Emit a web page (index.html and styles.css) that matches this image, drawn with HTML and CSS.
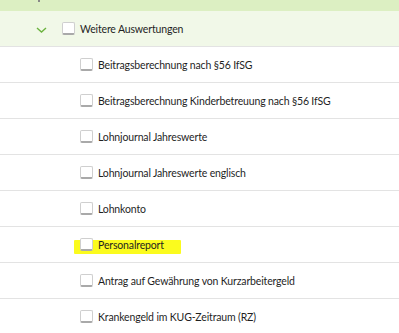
FILE: index.html
```html
<!DOCTYPE html>
<html lang="de">
<head>
    <meta charset="UTF-8">
    <title>Auswertungen</title>
    <link rel="stylesheet" href="styles.css">
</head>
<body>
    <div class="top-strip"><span class="tick"></span></div>

    <div class="row group">
        <svg class="chevron" width="11" height="6" viewBox="0 0 11 6">
            <path d="M1 1 L5.5 5 L10 1" fill="none" stroke="#6cb33f" stroke-width="1.4"/>
        </svg>
        <span class="box"></span>
        <span class="label">Weitere Auswertungen</span>
    </div>

    <div class="row item"><span class="box"></span><span class="label">Beitragsberechnung nach §56 IfSG</span></div>
    <div class="row item"><span class="box"></span><span class="label">Beitragsberechnung Kinderbetreuung nach §56 IfSG</span></div>
    <div class="row item"><span class="box"></span><span class="label">Lohnjournal Jahreswerte</span></div>
    <div class="row item"><span class="box"></span><span class="label">Lohnjournal Jahreswerte englisch</span></div>
    <div class="row item"><span class="box"></span><span class="label">Lohnkonto</span></div>
    <div class="row item">
        <span class="marker"></span>
        <span class="box"></span><span class="label">Personalreport</span>
    </div>
    <div class="row item"><span class="box"></span><span class="label">Antrag auf Gewährung von Kurzarbeitergeld</span></div>
    <div class="row item"><span class="box"></span><span class="label">Krankengeld im KUG-Zeitraum (RZ)</span></div>
</body>
</html>
```

FILE: styles.css
```css
* {
    margin: 0;
    padding: 0;
    box-sizing: border-box;
}

body {
    background: white;
    color: #1f1f1f;
    font-family: Lato, "Open Sans", sans-serif;
    font-size: 10.5px;
    letter-spacing: -0.15px;
}

.top-strip {
    height: 11px;
    background: #dcefc2;
    position: relative;
}

.top-strip .tick {
    position: absolute;
    left: 38px;
    top: 0;
    width: 2px;
    height: 2px;
    background: #888;
}

.row {
    height: 36px;
    display: flex;
    align-items: center;
    border-bottom: 1px solid #e3e3e3;
    position: relative;
}

.group {
    background: #f1f8e8;
    padding-left: 36px;
}

.chevron {
    margin-right: 15px;
    margin-top: 3px;
}

.item {
    padding-left: 80px;
}

.box {
    width: 13px;
    height: 13px;
    border: 1px solid #cfcfcf;
    border-bottom: 2px solid #a9a9a9;
    border-radius: 2px;
    background: white;
    margin-right: 5px;
    position: relative;
}

.label {
    position: relative;
    line-height: 14px;
}

/* highlighter stroke */
.marker {
    position: absolute;
    left: 74px;
    top: 13px;
    width: 107px;
    height: 14px;
    background: #fbfb1e;
    border-radius: 1px;
}
```
